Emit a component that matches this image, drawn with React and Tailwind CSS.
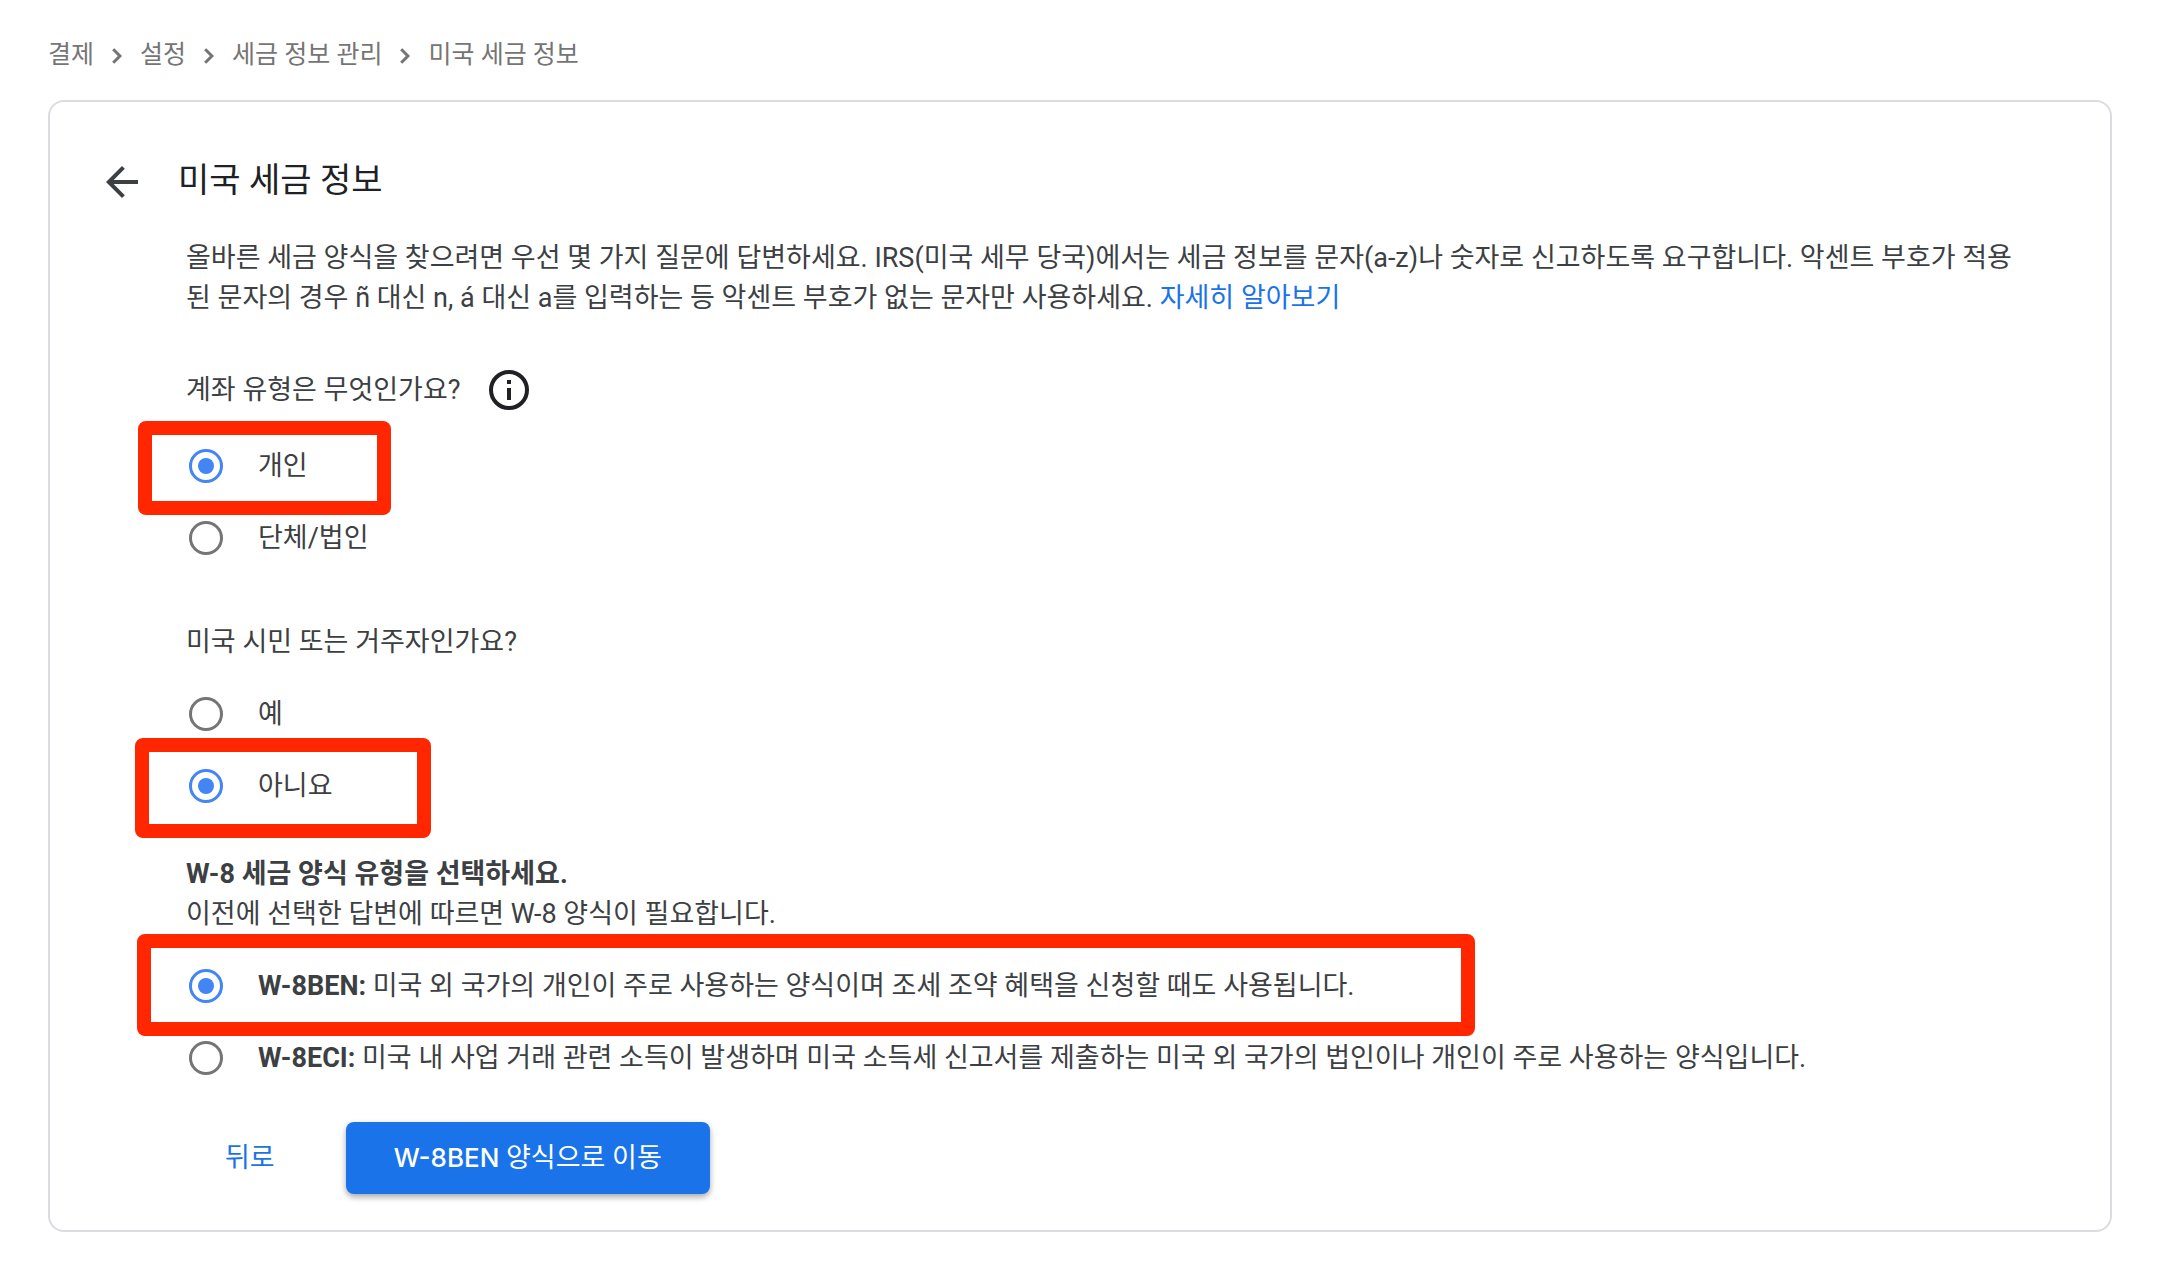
const crumbs = ['결제', '설정', '세금 정보 관리', '미국 세금 정보'];

function Chevron() {
  return (
    <svg viewBox="0 0 10 16" className="h-4 w-2.5 shrink-0" fill="none" stroke="currentColor" strokeWidth="3" aria-hidden="true">
      <path d="M1.2 1.2L7.9 8L1.2 14.8" />
    </svg>
  );
}

function Radio({ name, defaultChecked, mark, children }) {
  return (
    <div className="relative">
      <label className="flex h-18 items-center gap-[35px]">
        <input
          type="radio"
          name={name}
          defaultChecked={defaultChecked}
          className="ml-[3px] grid size-[34px] shrink-0 appearance-none place-items-center rounded-full border-[3px] border-[#757575] before:size-4 before:rounded-full checked:border-[#4285f4] checked:before:bg-[#4285f4]"
        />
        <span>{children}</span>
      </label>
      {mark && <span aria-hidden="true" className={`pointer-events-none absolute rounded-lg border-14 border-[#ff2600] ${mark}`} />}
    </div>
  );
}

export default function App() {
  return (
    <main className="min-h-screen bg-white px-12 pb-8 font-['Roboto','Noto_Sans_CJK_KR',sans-serif] text-[27px] leading-10 text-[#3c4043]">
      <nav aria-label="breadcrumb" className="flex h-25 items-center pt-3 text-[25px] text-[#757575]">
        <ol className="flex items-center gap-[18px]">
          {crumbs.map((c, i) => (
            <li key={c} className="flex items-center gap-[18px]">
              {i > 0 && <Chevron />}
              <a href="#" className="-mt-0.5">{c}</a>
            </li>
          ))}
        </ol>
      </nav>
      <section className="rounded-2xl border-2 border-[#dadce0] px-12 pt-12 pb-9">
        <header className="flex h-16 items-center gap-8">
          <button type="button" aria-label="뒤로" className="grid size-12 place-items-center">
            <svg viewBox="0 0 24 24" className="size-12" fill="currentColor" aria-hidden="true">
              <path d="M20 11H7.83l5.59-5.59L12 4l-8 8 8 8 1.41-1.41L7.83 13H20v-2z" />
            </svg>
          </button>
          <h1 className="pb-1 text-[34px] text-[#202124]">미국 세금 정보</h1>
        </header>
        <div className="pr-8 pl-22">
          <p className="mt-6">
            올바른 세금 양식을 찾으려면 우선 몇 가지 질문에 답변하세요. IRS(미국 세무 당국)에서는 세금 정보를 문자(a-z)나 숫자로 신고하도록 요구합니다. 악센트 부호가 적용된 문자의 경우 ñ 대신 n, á 대신 a를 입력하는 등 악센트 부호가 없는 문자만 사용하세요.{' '}
            <a href="#" className="text-[#1a73e8]">자세히 알아보기</a>
          </p>
          <fieldset className="mt-13">
            <legend className="flex items-center gap-7">
              계좌 유형은 무엇인가요?
              <button type="button" aria-label="정보" className="text-[#202124]">
                <svg viewBox="0 0 40 40" className="size-10" aria-hidden="true">
                  <circle cx="20" cy="20" r="18" fill="none" stroke="currentColor" strokeWidth="4" />
                  <path fill="currentColor" d="M18 10h4v4h-4zM18 18h4v12h-4z" />
                </svg>
              </button>
            </legend>
            <div className="mt-5">
              <Radio name="account" defaultChecked mark="-top-[9px] -left-12 h-[94px] w-[253px]">개인</Radio>
              <Radio name="account">단체/법인</Radio>
            </div>
          </fieldset>
          <fieldset className="mt-12">
            <legend>미국 시민 또는 거주자인가요?</legend>
            <div className="mt-4">
              <Radio name="resident">예</Radio>
              <Radio name="resident" defaultChecked mark="-top-3 -left-[51px] h-25 w-74">아니요</Radio>
            </div>
          </fieldset>
          <fieldset className="mt-8">
            <legend>
              <strong className="block font-bold">W-8 세금 양식 유형을 선택하세요.</strong>
              <span className="block">이전에 선택한 답변에 따르면 W-8 양식이 필요합니다.</span>
            </legend>
            <div className="mt-4">
              <Radio name="form" defaultChecked mark="-top-4 -left-[49px] h-[102px] w-[1338px]">
                <b>W-8BEN:</b> 미국 외 국가의 개인이 주로 사용하는 양식이며 조세 조약 혜택을 신청할 때도 사용됩니다.
              </Radio>
              <Radio name="form">
                <b>W-8ECI:</b> 미국 내 사업 거래 관련 소득이 발생하며 미국 소득세 신고서를 제출하는 미국 외 국가의 법인이나 개인이 주로 사용하는 양식입니다.
              </Radio>
            </div>
          </fieldset>
          <div className="mt-7 flex h-18 items-stretch gap-8">
            <button type="button" className="px-[39px] text-[#1a73e8]">뒤로</button>
            <button type="button" className="rounded-lg bg-[#1a73e8] px-12 text-white shadow-[0_3px_6px_rgba(0,0,0,0.35)]">
              <span className="font-['Inter',sans-serif] text-[26px] font-medium">W-8BEN</span> 양식으로 이동
            </button>
          </div>
        </div>
      </section>
    </main>
  );
}
